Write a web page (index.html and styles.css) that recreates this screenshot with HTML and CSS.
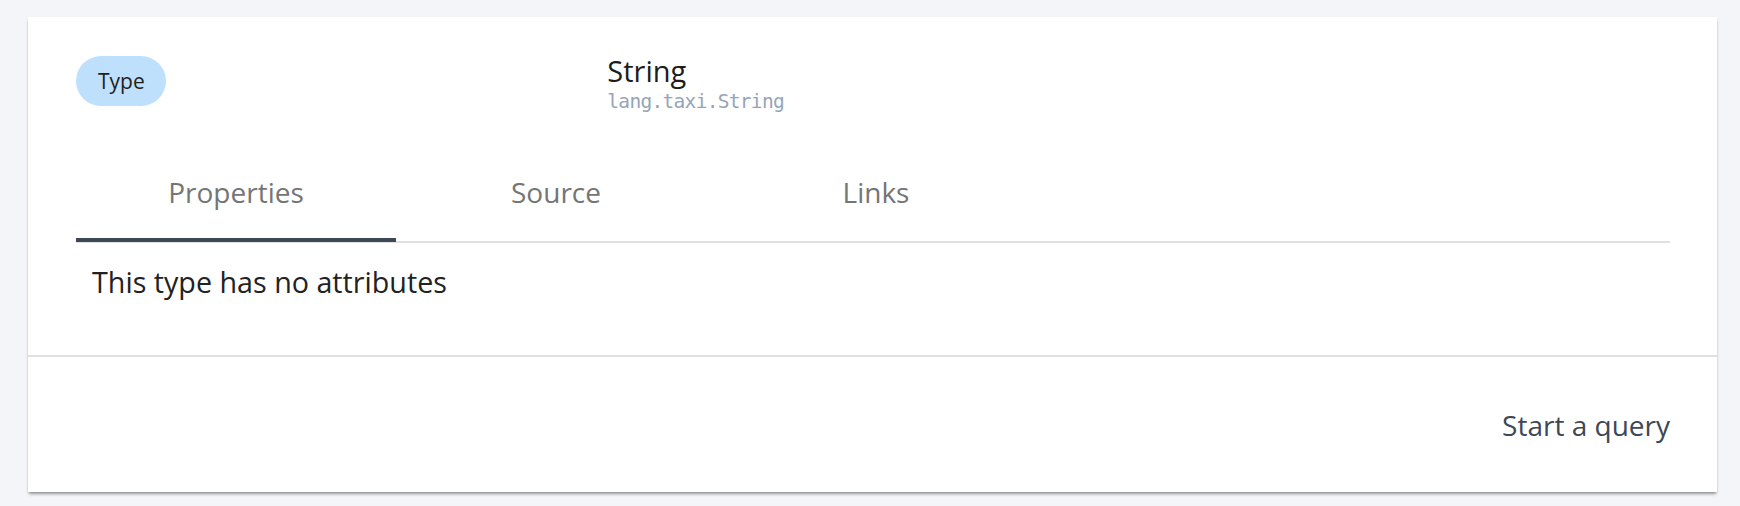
FILE: index.html
```html
<!DOCTYPE html>
<html lang="en">
<head>
<meta charset="utf-8">
<title>String</title>
<link rel="stylesheet" href="styles.css">
</head>
<body>
  <div class="card">
    <div class="card-body">
      <div class="header">
        <div class="badge-col"><span class="badge">Type</span></div>
        <div class="title-col">
          <div class="title">String</div>
          <div class="qualified">lang.taxi.String</div>
        </div>
      </div>
      <div class="tabs">
        <div class="tab active">Properties</div>
        <div class="tab">Source</div>
        <div class="tab">Links</div>
      </div>
      <div class="tab-content">This type has no attributes</div>
    </div>
    <div class="card-footer">
      <span class="action">Start a query</span>
    </div>
  </div>
</body>
</html>
```

FILE: styles.css
```css
html, body {
  margin: 0;
  padding: 0;
}
body {
  background: #f4f5f9;
  font-family: "Open Sans", "Noto Sans", sans-serif;
  padding: 17px 23px 0 28px;
  height: 506px;
  box-sizing: border-box;
}
.card {
  background: #ffffff;
  height: 475px;
  display: flex;
  flex-direction: column;
  box-shadow: 0 3px 3px -1px rgba(0, 0, 0, 0.35), 0 1px 2px rgba(0, 0, 0, 0.12);
}
.card-body {
  padding: 34px 47px 0 48px;
  flex: 1;
  border-bottom: 2px solid #e0e0e0;
}
.header {
  display: grid;
  grid-template-columns: 1fr 2fr;
  align-items: center;
}
.badge {
  display: inline-flex;
  align-items: center;
  height: 50px;
  padding: 0 21px 0 22px;
  border-radius: 25px;
  background: #bee0fc;
  color: #1f1f1f;
  font-size: 21px;
  margin-top: -2px;
}
.title {
  font-size: 29px;
  color: #1c1c1c;
  line-height: 1.362;
}
.qualified {
  font-family: "DejaVu Sans Mono", monospace;
  font-size: 19.5px;
  letter-spacing: -0.7px;
  color: #95a5b8;
  line-height: 23px;
}
.tabs {
  display: flex;
  margin-top: 40px;
  border-bottom: 2px solid #e0e0e0;
}
.tab {
  position: relative;
  width: 320px;
  text-align: center;
  font-size: 28px;
  line-height: 1.362;
  color: #757575;
  padding: 20px 0 29px;
}
.tab.active::after {
  content: "";
  position: absolute;
  left: 0;
  right: 0;
  bottom: -1px;
  height: 4px;
  background: #3d4856;
}
.tab-content {
  padding: 19px 16px 0;
  font-size: 28.7px;
  line-height: 39px;
  color: #222222;
}
.card-footer {
  height: 135px;
  padding: 0 47px 0 48px;
  display: flex;
  align-items: center;
  justify-content: flex-end;
}
.action {
  font-size: 28px;
  color: #3c4858;
}
```
